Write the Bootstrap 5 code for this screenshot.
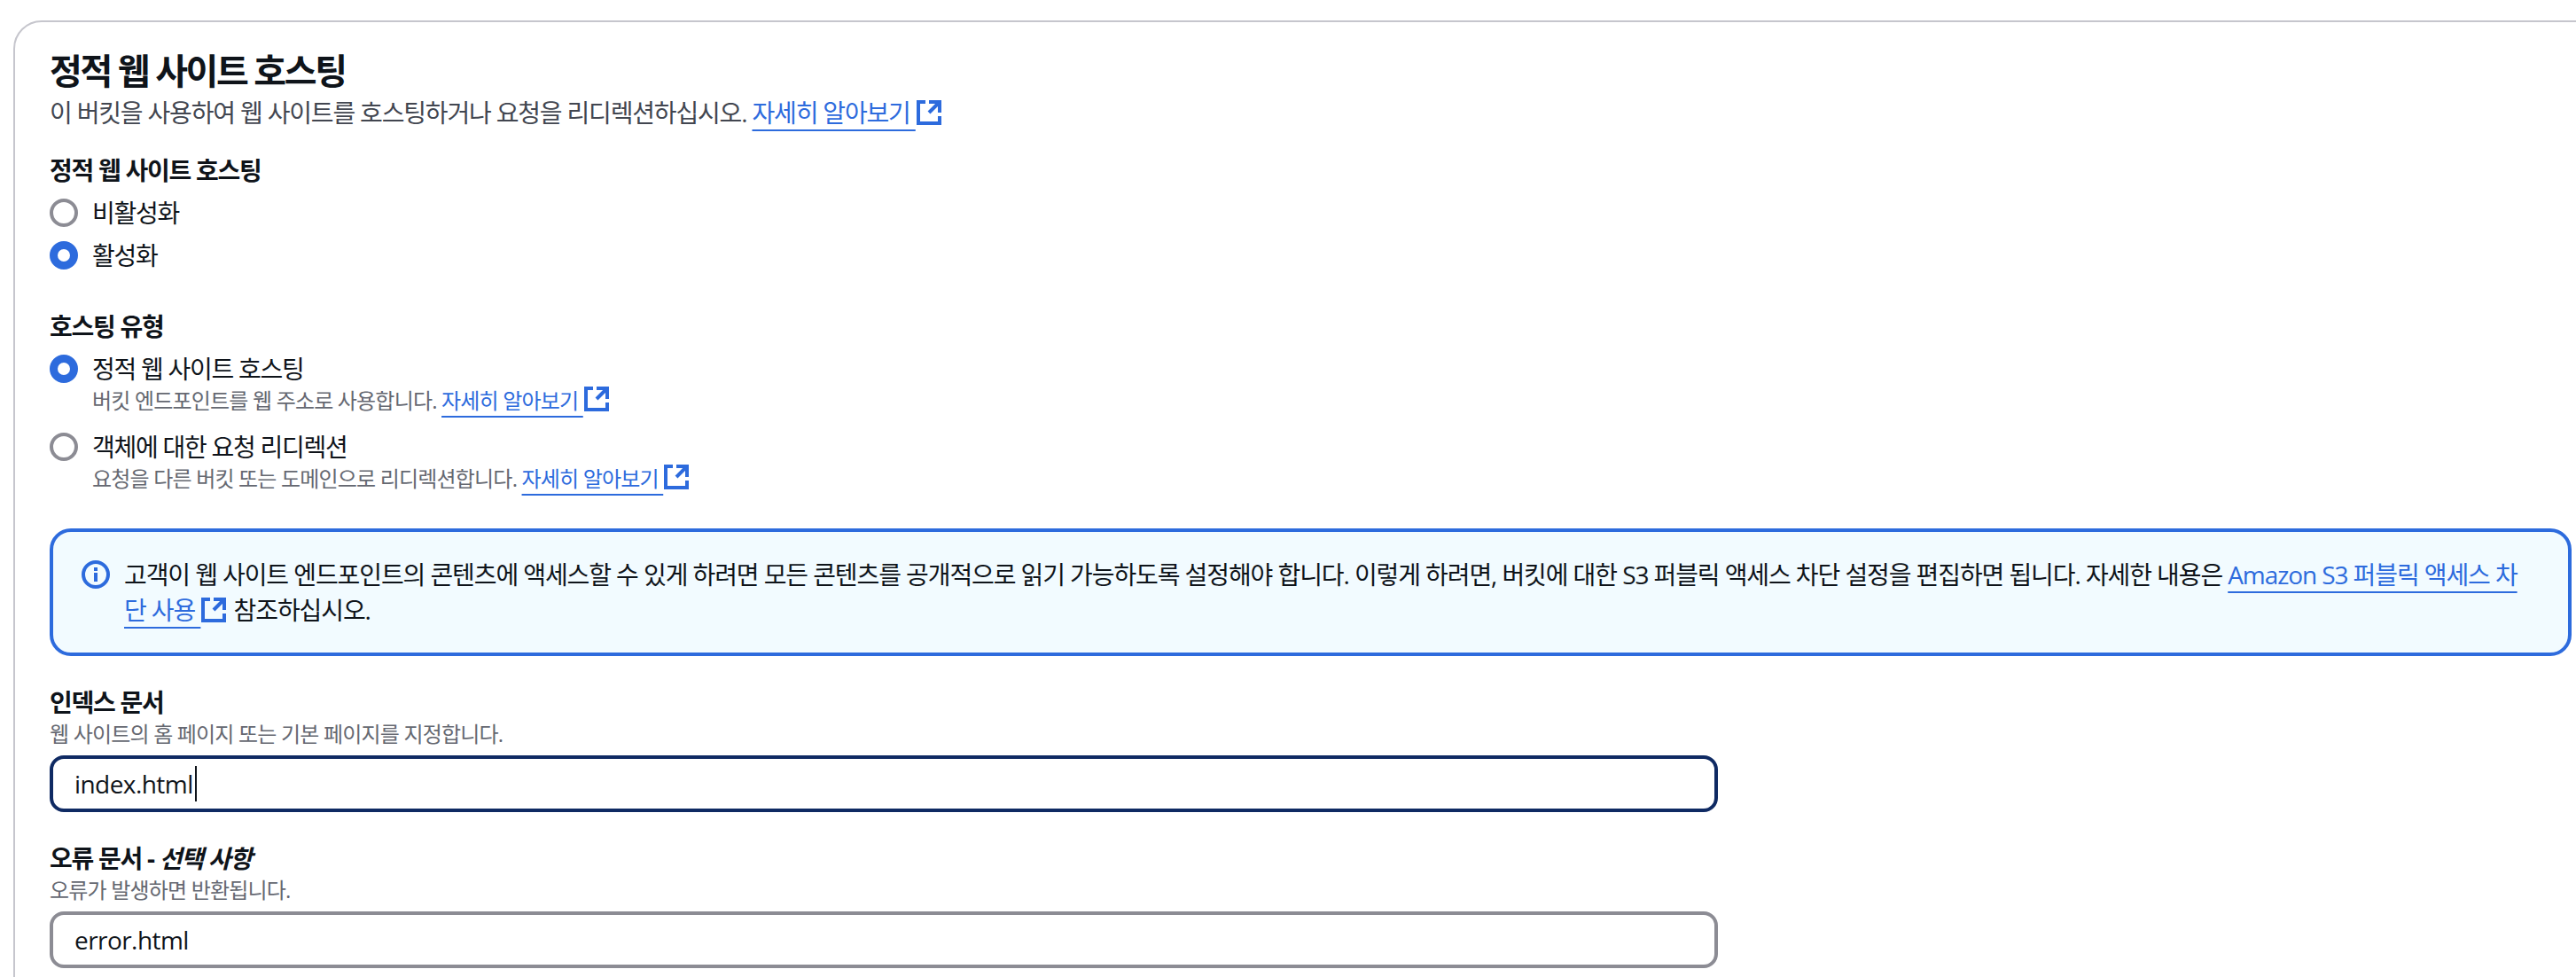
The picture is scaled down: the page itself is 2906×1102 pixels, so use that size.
<!DOCTYPE html>
<html lang="ko">
<head>
  <meta charset="UTF-8">
  <title>정적 웹 사이트 호스팅</title>
  <link href="https://cdn.jsdelivr.net/npm/bootstrap@5.3.0/dist/css/bootstrap.min.css" rel="stylesheet">
  <style>
    body {
      font-family: "Open Sans", "Noto Sans CJK KR", sans-serif;
      font-size: 28px;
      line-height: 40px;
      color: #0f141a;
      background: #fff;
      overflow: hidden;
      letter-spacing: -0.045em;
    }
    .page-wrap { padding: 23px 0 0 15px; margin-right: -36px; }
    .site-card { border: 2px solid #c6c6cd; border-radius: 32px; padding: 31px 39px 40px; }
    .site-title { font-size: 40px; line-height: 48px; font-weight: 700; margin: 0 0 3px; letter-spacing: -0.06em; }
    .site-sub { color: #424650; margin-bottom: 25px; letter-spacing: -0.042em; }
    .field-label { font-weight: 700; margin: 0; display: block; }
    .field-hint { font-size: 24px; line-height: 32px; color: #656871; letter-spacing: -0.034em; }
    .ext-link { color: #2d6bdd; text-decoration: underline; text-decoration-thickness: 2px; text-underline-offset: 8px; }
    .ext-icon { width: 32px; height: 32px; vertical-align: 1px; margin: -6px 0 -6px -1px; fill: none; stroke: #2d6bdd; stroke-width: 2; }
    .radio-row { display: flex; gap: 16px; align-items: flex-start; margin: 0; padding: 0; min-height: 40px; }
    .radio-row .form-check-input {
      width: 32px; height: 32px; margin: 4px 0 0; flex: none; float: none;
      border: 4px solid #8c8c94; background-color: #fff; background-image: none;
    }
    .radio-row .form-check-input:checked { border: 9px solid #2d6bdd; background-color: #fff; background-image: none; }
    .radio-row .form-check-input:focus { box-shadow: none; }
    .radio-group-a { display: flex; flex-direction: column; gap: 8px; margin: 8px 0 40px; }
    .radio-group-b { display: flex; flex-direction: column; gap: 16px; margin: 8px 0 40px; }
    .info-box {
      display: flex; gap: 16px; border: 4px solid #2d6bdd; border-radius: 24px; background: #f2fbff;
      padding: 28px 40px 28px 32px; margin-bottom: 32px; letter-spacing: -0.039em;
    }
    .info-box .info-icon { width: 32px; height: 32px; flex: none; margin-top: 4px; fill: none; stroke: #2d6bdd; stroke-width: 2; }
    .text-field { position: relative; margin-top: 8px; }
    .text-field .form-control {
      width: 1882px; height: 64px; border: 4px solid #8c8c94; border-radius: 16px; padding: 0 24px;
      font-size: 28px; line-height: 40px; color: #0f141a; letter-spacing: -0.02em; box-shadow: none;
    }
    .text-field .form-control.is-active { border-color: #0f2a63; }
    .text-caret { position: absolute; left: 164px; top: 12px; width: 2px; height: 40px; background: #0f141a; }
    .field-block { margin-bottom: 32px; }
  </style>
</head>
<body>
<div class="page-wrap">
  <div class="card site-card">
    <h2 class="site-title">정적 웹 사이트 호스팅</h2>
    <div class="site-sub">이 버킷을 사용하여 웹 사이트를 호스팅하거나 요청을 리디렉션하십시오. <a href="#" class="ext-link">자세히 알아보기 </a><svg class="ext-icon" viewBox="0 0 16 16"><path d="M14 8.01v-6H8"/><path d="M14 2 8 8"/><path d="M6 2H2v12h12v-4"/></svg></div>

    <div class="field-label">정적 웹 사이트 호스팅</div>
    <div class="radio-group-a">
      <label class="radio-row"><input class="form-check-input" type="radio" name="hosting"><span>비활성화</span></label>
      <label class="radio-row"><input class="form-check-input" type="radio" name="hosting" checked><span>활성화</span></label>
    </div>

    <div class="field-label">호스팅 유형</div>
    <div class="radio-group-b">
      <div class="radio-row">
        <input class="form-check-input" type="radio" name="hostingType" id="typeStatic" checked>
        <div>
          <label for="typeStatic" class="d-block">정적 웹 사이트 호스팅</label>
          <div class="field-hint">버킷 엔드포인트를 웹 주소로 사용합니다. <a href="#" class="ext-link">자세히 알아보기 </a><svg class="ext-icon" viewBox="0 0 16 16"><path d="M14 8.01v-6H8"/><path d="M14 2 8 8"/><path d="M6 2H2v12h12v-4"/></svg></div>
        </div>
      </div>
      <div class="radio-row">
        <input class="form-check-input" type="radio" name="hostingType" id="typeRedirect">
        <div>
          <label for="typeRedirect" class="d-block">객체에 대한 요청 리디렉션</label>
          <div class="field-hint">요청을 다른 버킷 또는 도메인으로 리디렉션합니다. <a href="#" class="ext-link">자세히 알아보기 </a><svg class="ext-icon" viewBox="0 0 16 16"><path d="M14 8.01v-6H8"/><path d="M14 2 8 8"/><path d="M6 2H2v12h12v-4"/></svg></div>
        </div>
      </div>
    </div>

    <div class="info-box">
      <svg class="info-icon" viewBox="0 0 16 16"><circle cx="8" cy="8" r="7"/><path d="M8 7v5"/><path d="M8 4v2"/></svg>
      <div>고객이 웹 사이트 엔드포인트의 콘텐츠에 액세스할 수 있게 하려면 모든 콘텐츠를 공개적으로 읽기 가능하도록 설정해야 합니다. 이렇게 하려면, 버킷에 대한 S3 퍼블릭 액세스 차단 설정을 편집하면 됩니다. 자세한 내용은 <a href="#" class="ext-link">Amazon S3 퍼블릭 액세스 차단 사용 </a><svg class="ext-icon" viewBox="0 0 16 16"><path d="M14 8.01v-6H8"/><path d="M14 2 8 8"/><path d="M6 2H2v12h12v-4"/></svg> 참조하십시오.</div>
    </div>

    <div class="field-block">
      <label class="field-label" for="indexDoc">인덱스 문서</label>
      <div class="field-hint">웹 사이트의 홈 페이지 또는 기본 페이지를 지정합니다.</div>
      <div class="text-field">
        <input class="form-control is-active" id="indexDoc" type="text" value="index.html">
        <span class="text-caret"></span>
      </div>
    </div>

    <div class="field-block">
      <label class="field-label" for="errorDoc">오류 문서 - <i>선택 사항</i></label>
      <div class="field-hint">오류가 발생하면 반환됩니다.</div>
      <div class="text-field">
        <input class="form-control" id="errorDoc" type="text" value="error.html">
      </div>
    </div>
  </div>
</div>
<script src="https://cdn.jsdelivr.net/npm/bootstrap@5.3.0/dist/js/bootstrap.bundle.min.js"></script>
</body>
</html>
